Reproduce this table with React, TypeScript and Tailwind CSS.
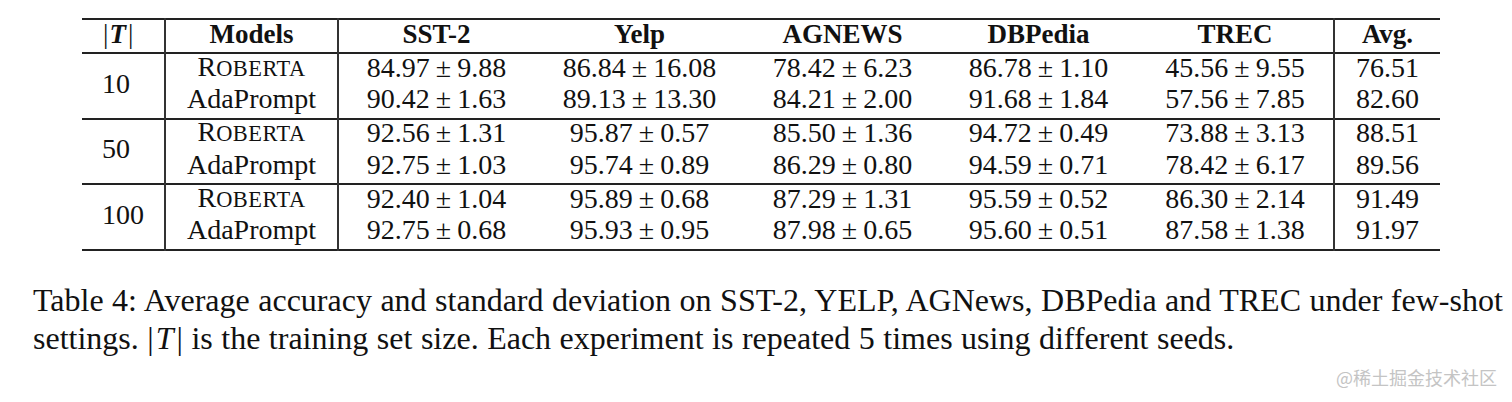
const groups = [
  {
    size: "10",
    rows: [
      { model: "Roberta", sc: true, vals: ["84.97 ± 9.88", "86.84 ± 16.08", "78.42 ± 6.23", "86.78 ± 1.10", "45.56 ± 9.55"], avg: "76.51" },
      { model: "AdaPrompt", sc: false, vals: ["90.42 ± 1.63", "89.13 ± 13.30", "84.21 ± 2.00", "91.68 ± 1.84", "57.56 ± 7.85"], avg: "82.60" },
    ],
  },
  {
    size: "50",
    rows: [
      { model: "Roberta", sc: true, vals: ["92.56 ± 1.31", "95.87 ± 0.57", "85.50 ± 1.36", "94.72 ± 0.49", "73.88 ± 3.13"], avg: "88.51" },
      { model: "AdaPrompt", sc: false, vals: ["92.75 ± 1.03", "95.74 ± 0.89", "86.29 ± 0.80", "94.59 ± 0.71", "78.42 ± 6.17"], avg: "89.56" },
    ],
  },
  {
    size: "100",
    rows: [
      { model: "Roberta", sc: true, vals: ["92.40 ± 1.04", "95.89 ± 0.68", "87.29 ± 1.31", "95.59 ± 0.52", "86.30 ± 2.14"], avg: "91.49" },
      { model: "AdaPrompt", sc: false, vals: ["92.75 ± 0.68", "95.93 ± 0.95", "87.98 ± 0.65", "95.60 ± 0.51", "87.58 ± 1.38"], avg: "91.97" },
    ],
  },
];

const datasets = ["SST-2", "Yelp", "AGNEWS", "DBPedia", "TREC"];

const PlusMinus = ({ v }: { v: string }) => {
  const [a, b] = v.split(" ± ");
  return (
    <span className="whitespace-nowrap">
      {a}
      <span className="mx-[6px]">±</span>
      {b}
    </span>
  );
};

export default function App() {
  return (
    <div className="w-[1512px] h-[402px] bg-white text-[#111] font-['Liberation_Serif',serif] overflow-hidden relative">
      <table className="ml-[82px] mt-[18px] w-[1358px] table-fixed border-collapse">
        <colgroup>
          <col className="w-[83px]" />
          <col className="w-[173px]" />
          <col className="w-[196px]" />
          <col className="w-[211px]" />
          <col className="w-[195px]" />
          <col className="w-[197px]" />
          <col className="w-[197px]" />
          <col className="w-[106px]" />
        </colgroup>
        <thead>
          <tr className="h-[34px] border-t-2 border-b-2 border-[#222] font-bold text-[27px] leading-[24px]">
            <th className="border-r-2 border-[#333] text-left pl-[21px] pb-[5px]">
              <span className="font-normal">|</span>
              <span className="italic ml-[1px] mr-[2px]">T</span>
              <span className="font-normal">|</span>
            </th>
            <th className="border-r-2 border-[#333] text-center pb-[5px]">Models</th>
            {datasets.map((d, i) => (
              <th key={d} className={`text-center pb-[5px] ${i === 4 ? "border-r-2 border-[#333]" : ""}`}>{d}</th>
            ))}
            <th className="text-center pb-[5px]">Avg.</th>
          </tr>
        </thead>
        <tbody className="text-[28px] leading-[24px]">
          {groups.map((g) =>
            g.rows.map((r, ri) => (
              <tr
                key={g.size + ri}
                className={`${ri === 0 ? "h-[33px] border-t-2 border-[#222]" : "h-[32.5px]"} ${g.size === "100" && ri === 1 ? "border-b-2 border-[#222]" : ""}`}
              >
                {ri === 0 && (
                  <td rowSpan={2} className="border-r-2 border-[#333] text-left pl-[20px] align-middle pb-[4px]">{g.size}</td>
                )}
                <td className="border-r-2 border-[#333] text-center pb-[5px]">
                  {r.sc ? (
                    <span>
                      R<span className="text-[0.8em] tracking-[0.5px]">OBERTA</span>
                    </span>
                  ) : (
                    r.model
                  )}
                </td>
                {r.vals.map((v, vi) => (
                  <td key={vi} className={`text-center pb-[5px] ${vi === 4 ? "border-r-2 border-[#333]" : ""}`}>
                    <PlusMinus v={v} />
                  </td>
                ))}
                <td className="text-center pb-[5px]">{r.avg}</td>
              </tr>
            ))
          )}
        </tbody>
      </table>

      <p className="ml-[33px] mt-[30px] w-[1478px] text-[32px] leading-[38px] [word-spacing:0.5px]">
        Table 4: Average accuracy and standard deviation on SST-2, YELP, AGNews, DBPedia and TREC under few-shot
        settings. |<span className="italic ml-[2px] mr-[3px]">T</span>| is the training set size. Each experiment is repeated 5 times using different seeds.
      </p>

      <div className="absolute right-[15px] top-[368px] text-[18px] leading-none text-[#c4c4c4] font-['Noto_Sans_CJK_SC',sans-serif]">
        @稀土掘金技术社区
      </div>
    </div>
  );
}
